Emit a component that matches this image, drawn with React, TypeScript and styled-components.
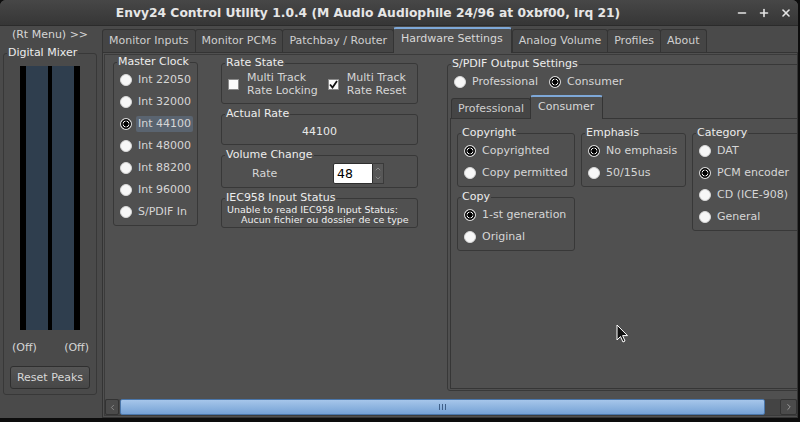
import styled, { createGlobalStyle, css } from "styled-components";
import { Minus, Plus, X, ChevronLeft, ChevronRight, ChevronUp, ChevronDown } from "lucide-react";

const GlobalStyle = createGlobalStyle`
  html, body {
    margin: 0;
    padding: 0;
    background: #0d0d0d;
  }
  body {
    font-family: "DejaVu Sans", "Noto Sans", sans-serif;
    font-size: 11px;
    color: #d6d6d6;
  }
  * {
    box-sizing: border-box;
  }
`;

// window chrome
const Window = styled.div`
  position: relative;
  width: 798px;
  height: 418px;
  background: #4a4a4a;
  border-radius: 6px 6px 0 0;
  display: flex;
  flex-direction: column;
  overflow: hidden;
`;

const TitleBar = styled.div`
  flex: none;
  height: 26px;
  display: flex;
  align-items: center;
  background: linear-gradient(#474747, #363636);
  border-bottom: 1px solid #2b2b2b;
`;

const Title = styled.div`
  flex: 1;
  text-align: center;
  white-space: nowrap;
  font-weight: bold;
  font-size: 12.3px;
  color: #e6e6e6;
`;

const WinButtons = styled.div`
  display: flex;
  gap: 10px;
  padding-right: 6px;
  color: #e4e4e4;
`;

const Body = styled.div`
  flex: 1;
  display: flex;
  min-height: 0;
`;

// left side: digital mixer
const LeftPanel = styled.div`
  width: 102px;
  flex: none;
  display: flex;
  flex-direction: column;
  padding: 2px 5px 0 3px;
`;

const RtMenu = styled.div`
  text-align: center;
  line-height: 14px;
`;

const Frame = styled.fieldset<{ $w?: number }>`
  margin: 0;
  padding: 0;
  min-width: 0;
  flex: none;
  width: ${({ $w }) => ($w ? `${$w}px` : "auto")};
  border: 1px solid #383838;
  border-radius: 3px;
`;

const Legend = styled.legend`
  margin-left: 3px;
  padding: 0 1px;
  line-height: 14px;
  color: #ededed;
`;

const MixerBody = styled.div`
  padding: 6px 0 5px;
  display: flex;
  flex-direction: column;
`;

const Meter = styled.div`
  width: 60px;
  height: 264px;
  margin: 0 auto;
  padding: 0 6px;
  background: #000;
  display: flex;
  justify-content: space-between;
`;

const MeterBar = styled.div`
  width: 22px;
  background: #2f3e4e;
`;

const OffRow = styled.div`
  display: flex;
  justify-content: space-between;
  padding: 0 7px 0 8px;
  margin-top: 11px;
  line-height: 14px;
`;

const Button = styled.div`
  width: 80px;
  height: 23px;
  margin: 11px auto 0;
  display: flex;
  align-items: center;
  justify-content: center;
  border: 1px solid #2f2f2f;
  border-radius: 3px;
  background: linear-gradient(#555, #474747);
  color: #d8d8d8;
`;

// notebook
const Notebook = styled.div`
  flex: 1;
  min-width: 0;
  display: flex;
  flex-direction: column;
`;

const TabStrip = styled.div<{ $h: number; $pl?: number }>`
  flex: none;
  height: ${({ $h }) => $h}px;
  display: flex;
  align-items: flex-end;
  padding-left: ${({ $pl }) => $pl || 0}px;
  position: relative;
  z-index: 1;
`;

const Tab = styled.div<{ $active?: boolean; $h: number }>`
  height: ${({ $h }) => $h}px;
  padding: 0 6px;
  display: flex;
  align-items: center;
  white-space: nowrap;
  line-height: 14px;
  margin-right: -1px;
  background: #454545;
  border: 1px solid #343434;
  border-bottom: none;
  border-radius: 3px 3px 0 0;
  color: #cfcfcf;
  ${({ $active }) =>
    $active &&
    css`
      margin-bottom: -1px;
      margin-right: 0;
      align-items: flex-start;
      padding: 3px 8px 0 7px;
      background: #505050;
      border-top: 2px solid #7ea8d8;
      color: #d8d8d8;
    `}
`;

const Page = styled.div`
  flex: 1;
  min-height: 0;
  display: flex;
  flex-direction: column;
  padding: 1px 0 1px 1px;
  background: #505050;
  border: 1px solid #343434;
`;

const Scrolled = styled.div`
  flex: 1;
  min-height: 0;
  display: flex;
  flex-direction: column;
  border: 1px solid #3b3b3b;
  border-right: none;
`;

const Viewport = styled.div`
  flex: 1;
  min-height: 0;
  overflow: hidden;
  display: flex;
  align-items: flex-start;
  padding-left: 8px;
`;

const Column = styled.div<{ $ml?: number; $mt?: number; $w?: number }>`
  flex: none;
  display: flex;
  flex-direction: column;
  gap: 3px;
  margin-left: ${({ $ml }) => $ml || 0}px;
  margin-top: ${({ $mt }) => $mt || 0}px;
  width: ${({ $w }) => ($w ? `${$w}px` : "auto")};
`;

// radio buttons
const RadioList = styled.div`
  display: flex;
  flex-direction: column;
  padding: 0 0 2px 6px;
`;

const RadioRow = styled.div`
  height: 22px;
  display: flex;
  align-items: center;
  gap: 4px;
  white-space: nowrap;
`;

const RadioDot = styled.span<{ $on?: boolean }>`
  flex: none;
  width: 12px;
  height: 12px;
  border-radius: 50%;
  border: 1px solid #d8d8d8;
  background: ${({ $on }) =>
    $on
      ? "radial-gradient(circle, #000 0 2.4px, #fafafa 2.9px 3.2px, #0c0c0c 3.6px 4.8px, #f7f7f7 5.2px)"
      : "#f7f7f7"};
`;

const RadioText = styled.span<{ $hl?: boolean }>`
  padding: 0 2px;
  line-height: 16px;
  border-radius: 2px;
  background: ${({ $hl }) => ($hl ? "#5a6470" : "transparent")};
`;

const Radio = ({ label, on, hl }: { label: string; on?: boolean; hl?: boolean }) => (
  <RadioRow>
    <RadioDot $on={on} />
    <RadioText $hl={hl}>{label}</RadioText>
  </RadioRow>
);

// rate state
const CheckRow = styled.div`
  display: flex;
  align-items: center;
  padding: 1px 0 6px 6px;
`;

const CheckItem = styled.div<{ $ml?: number }>`
  display: flex;
  align-items: center;
  gap: 8px;
  margin-left: ${({ $ml }) => $ml || 0}px;
`;

const CheckBox = styled.span`
  flex: none;
  width: 11px;
  height: 11px;
  background: #fafafa;
  border: 1px solid #8a8a8a;
  display: flex;
  align-items: center;
  justify-content: center;
`;

const CheckText = styled.span`
  line-height: 13px;
`;

const ValueRow = styled.div`
  height: 20px;
  margin-bottom: 3px;
  display: flex;
  align-items: center;
  justify-content: center;
  color: #e8e8e8;
`;

const SpinRow = styled.div`
  height: 23px;
  margin-bottom: 2px;
  display: flex;
  align-items: center;
  padding-left: 30px;
`;

const SpinLabel = styled.span`
  width: 81px;
`;

const SpinEntry = styled.div`
  width: 40px;
  height: 21px;
  padding-left: 3px;
  display: flex;
  align-items: center;
  background: #fff;
  border: 1px solid #2e2e2e;
  border-radius: 2px 0 0 2px;
  color: #000;
  font-size: 12.5px;
`;

const SpinButtons = styled.div`
  width: 11px;
  height: 21px;
  display: flex;
  flex-direction: column;
  border: 1px solid #3a3a3a;
  border-left: none;
  background: #575757;
  color: #a0a0a0;
`;

const SpinHalf = styled.div`
  flex: 1;
  display: flex;
  align-items: center;
  justify-content: center;
`;

const StatusText = styled.div<{ $pl: number }>`
  font-size: 9.5px;
  line-height: 10px;
  padding-left: ${({ $pl }) => $pl}px;
  color: #efefef;
  white-space: nowrap;
`;

const StatusBox = styled.div`
  padding-bottom: 2px;
`;

// s/pdif
const ModeRow = styled.div`
  height: 22px;
  display: flex;
  align-items: center;
  padding-left: 6px;
  gap: 9px;
`;

const InnerNotebook = styled.div`
  margin: 0 0 1px 2px;
  display: flex;
  flex-direction: column;
`;

const InnerPage = styled.div`
  height: 271px;
  display: flex;
  align-items: flex-start;
  gap: 6px;
  padding: 7px 6px;
  background: #505050;
  border: 1px solid #363636;
`;

// scrollbar
const HScroll = styled.div`
  flex: none;
  height: 16px;
  display: flex;
  background: #464646;
`;

const ArrowBtn = styled.div<{ $w: number }>`
  width: ${({ $w }) => $w}px;
  display: flex;
  align-items: center;
  justify-content: center;
  background: #4b4b4b;
  border: 1px solid #333;
  border-radius: 2px;
  color: #9a9a9a;
`;

const Slider = styled.div`
  width: 645px;
  margin-left: 1px;
  display: flex;
  align-items: center;
  justify-content: center;
  border: 1px solid #4a76aa;
  border-radius: 2px;
  background: linear-gradient(#a6c6ea, #76a2d6);
`;

const Trough = styled.div`
  flex: 1;
  background: #444;
`;

const Cursor = styled.svg`
  position: absolute;
  left: 616px;
  top: 324px;
`;

export default function App() {
  return (
    <>
      <GlobalStyle />
      <Window>
        <TitleBar>
          <Title>Envy24 Control Utility 1.0.4 (M Audio Audiophile 24/96 at 0xbf00, irq 21)</Title>
          <WinButtons>
            <Minus size={12} strokeWidth={3.2} />
            <Plus size={12} strokeWidth={3.2} />
            <X size={12} strokeWidth={3.2} />
          </WinButtons>
        </TitleBar>
        <Body>
          <LeftPanel>
            <RtMenu>(Rt Menu) &gt;&gt;</RtMenu>
            <Frame style={{ marginTop: 4 }}>
              <Legend>Digital Mixer</Legend>
              <MixerBody>
                <Meter>
                  <MeterBar />
                  <MeterBar />
                </Meter>
                <OffRow>
                  <span>(Off)</span>
                  <span>(Off)</span>
                </OffRow>
                <Button>Reset Peaks</Button>
              </MixerBody>
            </Frame>
          </LeftPanel>

          <Notebook>
            <TabStrip $h={26}>
              <Tab $h={23}>Monitor Inputs</Tab>
              <Tab $h={23}>Monitor PCMs</Tab>
              <Tab $h={23}>Patchbay / Router</Tab>
              <Tab $h={26} $active>Hardware Settings</Tab>
              <Tab $h={23}>Analog Volume</Tab>
              <Tab $h={23}>Profiles</Tab>
              <Tab $h={23}>About</Tab>
            </TabStrip>
            <Page>
              <Scrolled>
                <Viewport>
                  <Column>
                    <Frame $w={85}>
                      <Legend>Master Clock</Legend>
                      <RadioList>
                        <Radio label="Int 22050" />
                        <Radio label="Int 32000" />
                        <Radio label="Int 44100" on hl />
                        <Radio label="Int 48000" />
                        <Radio label="Int 88200" />
                        <Radio label="Int 96000" />
                        <Radio label="S/PDIF In" />
                      </RadioList>
                    </Frame>
                  </Column>

                  <Column $ml={23} $mt={1} $w={197}>
                    <Frame>
                      <Legend>Rate State</Legend>
                      <CheckRow>
                        <CheckItem>
                          <CheckBox />
                          <CheckText>
                            Multi Track
                            <br />
                            Rate Locking
                          </CheckText>
                        </CheckItem>
                        <CheckItem $ml={10}>
                          <CheckBox>
                            <svg width="9" height="9" viewBox="0 0 9 9">
                              <path d="M1 4.5 L3.5 7.5 L8 1" fill="none" stroke="#111" strokeWidth="1.8" />
                            </svg>
                          </CheckBox>
                          <CheckText>
                            Multi Track
                            <br />
                            Rate Reset
                          </CheckText>
                        </CheckItem>
                      </CheckRow>
                    </Frame>
                    <Frame>
                      <Legend>Actual Rate</Legend>
                      <ValueRow>44100</ValueRow>
                    </Frame>
                    <Frame>
                      <Legend>Volume Change</Legend>
                      <SpinRow>
                        <SpinLabel>Rate</SpinLabel>
                        <SpinEntry>48</SpinEntry>
                        <SpinButtons>
                          <SpinHalf>
                            <ChevronUp size={8} strokeWidth={2} />
                          </SpinHalf>
                          <SpinHalf>
                            <ChevronDown size={8} strokeWidth={2} />
                          </SpinHalf>
                        </SpinButtons>
                      </SpinRow>
                    </Frame>
                    <Frame>
                      <Legend>IEC958 Input Status</Legend>
                      <StatusBox>
                        <StatusText $pl={5}>Unable to read IEC958 Input Status:</StatusText>
                        <StatusText $pl={19}>Aucun fichier ou dossier de ce type</StatusText>
                      </StatusBox>
                    </Frame>
                  </Column>

                  <Column $ml={29} $mt={2}>
                    <Frame>
                      <Legend>S/PDIF Output Settings</Legend>
                      <ModeRow>
                        <RadioRow>
                          <RadioDot />
                          <RadioText>Professional</RadioText>
                        </RadioRow>
                        <RadioRow>
                          <RadioDot $on />
                          <RadioText>Consumer</RadioText>
                        </RadioRow>
                      </ModeRow>
                      <InnerNotebook>
                        <TabStrip $h={25} $pl={1}>
                          <Tab $h={20}>Professional</Tab>
                          <Tab $h={24} $active>
                            Consumer
                          </Tab>
                        </TabStrip>
                        <InnerPage>
                          <Column>
                            <Frame $w={118}>
                              <Legend>Copyright</Legend>
                              <RadioList>
                                <Radio label="Copyrighted" on />
                                <Radio label="Copy permitted" />
                              </RadioList>
                            </Frame>
                            <Frame $w={118}>
                              <Legend>Copy</Legend>
                              <RadioList>
                                <Radio label="1-st generation" on />
                                <Radio label="Original" />
                              </RadioList>
                            </Frame>
                          </Column>
                          <Frame $w={105}>
                            <Legend>Emphasis</Legend>
                            <RadioList>
                              <Radio label="No emphasis" on />
                              <Radio label="50/15us" />
                            </RadioList>
                          </Frame>
                          <Frame $w={116}>
                            <Legend>Category</Legend>
                            <RadioList>
                              <Radio label="DAT" />
                              <Radio label="PCM encoder" on />
                              <Radio label="CD (ICE-908)" />
                              <Radio label="General" />
                            </RadioList>
                          </Frame>
                        </InnerPage>
                      </InnerNotebook>
                    </Frame>
                  </Column>
                </Viewport>
                <HScroll>
                  <ArrowBtn $w={14}>
                    <ChevronLeft size={9} strokeWidth={2} />
                  </ArrowBtn>
                  <Slider>
                    <svg width="7" height="6" viewBox="0 0 7 6">
                      <path d="M0.5 0 V6 M3.5 0 V6 M6.5 0 V6" stroke="#3e5f88" strokeWidth="1" />
                    </svg>
                  </Slider>
                  <Trough />
                  <ArrowBtn $w={17}>
                    <ChevronRight size={10} strokeWidth={2.4} />
                  </ArrowBtn>
                </HScroll>
              </Scrolled>
            </Page>
          </Notebook>
        </Body>
        <Cursor width="13" height="20" viewBox="0 0 13 20">
          <path d="M1 1 L1 16 L4.5 12.5 L7 18 L9 17 L6.6 11.6 L11.5 11.6 Z" fill="#111" stroke="#fff" strokeWidth="1" />
        </Cursor>
      </Window>
    </>
  );
}
